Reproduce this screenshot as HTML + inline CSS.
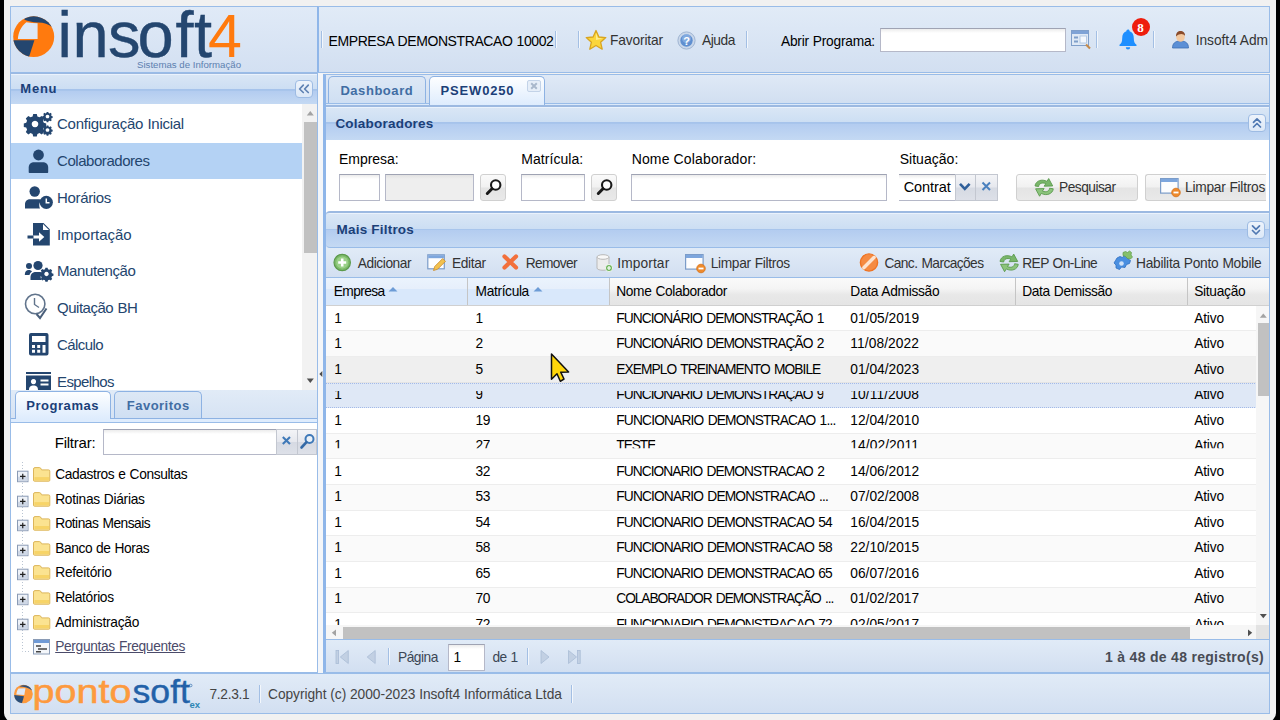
<!DOCTYPE html>
<html lang="pt-BR">
<head>
<meta charset="utf-8">
<title>Pontosoft - Colaboradores</title>
<style>
*{box-sizing:border-box;margin:0;padding:0}
html,body{width:1280px;height:720px;overflow:hidden;background:#000}
body{font-family:"Liberation Sans","DejaVu Sans",sans-serif;font-size:14px;color:#000;position:relative}
.abs{position:absolute}
#page{position:absolute;left:4px;top:0;width:1272px;height:722px;background:#f1f1f1;border-radius:0 0 9px 9px;overflow:hidden}
#app{position:absolute;left:-4px;top:0;width:1280px;height:720px}
.bd{border:1px solid #99bce8}
.t{position:absolute;white-space:nowrap;line-height:1}
.hdrgrad{border-top:2px solid #9cb9e1;background:linear-gradient(#eaf2fc 0,#eaf2fc 1px,#d9e6f5 1px,#ccdef3 15.500px,#a6c3eb 15.500px,#a9c6ec 17px,#b3ccf0 17px,#c4d9f3 100%)}
.tb{background:linear-gradient(#e1ebf7,#d2dff1)}
.sep{position:absolute;width:2px;border-left:1px solid #a3bfe4;border-right:1px solid #f3f7fc}
.inp{position:absolute;background:#fff linear-gradient(#ececec,#fff 4px);border:1px solid #b5b8c8;border-top-color:#9fa3b3}
.ro{background:#eee linear-gradient(#e2e2e2,#eee 4px)}
.btn{position:absolute;border:1px solid #d0d0d0;border-radius:3px;background:linear-gradient(#fafafa 0,#f1f1f1 48%,#e4e4e4 52%,#e9e9e9 100%)}
.trg{position:absolute;border:1px solid #c3c7d0;background:linear-gradient(#f3f4f7 0,#e6e8ee 48%,#d6dae3 52%,#dde0e8 100%)}
.tab{position:absolute;border:1px solid #8db2e3;border-bottom:none;border-radius:5px 5px 0 0;background:linear-gradient(#dde8f5,#cfdff3)}
.tab.on{background:linear-gradient(#fdfeff,#deecfd)}
.mi{position:absolute;left:11px;width:291px;height:36px}
svg{position:absolute;overflow:visible}
.gh{position:absolute;top:0;height:100%;border-right:1px solid #c5c5c5}
.row{position:absolute;left:0;width:931px;border-bottom:1px solid #ededed;background:#fff}
.row.alt{background:#fafafa}
</style>
</head>
<body>
<div id="page"><div id="app">

<!-- ============ NORTH: logo + top toolbar ============ -->
<div class="abs bd" style="left:10px;top:6px;width:309px;height:67px;background:linear-gradient(#e0eaf7,#d3e0f2)"></div>
<svg style="left:0;top:0" width="320" height="74" viewBox="0 0 320 74">
  <clipPath id="lgc"><ellipse cx="33.700" cy="36.650" rx="20.500" ry="20.300"/></clipPath>
  <ellipse cx="33.700" cy="36.650" rx="20.500" ry="20.300" fill="#ff7a0e"/>
  <g clip-path="url(#lgc)">
  <path d="M24.500 19.800 L24 12 L56 12 L56 30 L52.500 27.600 C48.500 23.700 43.500 22.300 37.600 22.400 C32.500 22.400 28 21.300 24.500 19.800Z" fill="#24466f"/>
  <path d="M37.600 23.300 L37.600 38.900 L17.900 38.900 C18.300 32.500 21 26.800 26.300 22.300 C30 22.900 34 23.200 37.600 23.300Z" fill="#dde8f6"/>
  <path d="M10 40.300 L34.400 40.300 L28.700 58 L10 58Z" fill="#24466f"/>
  </g>
  <text font-family="Liberation Sans, sans-serif" font-size="65" fill="#24466f" y="56.5" x="57.5 72.5 108 137.5 175.5 194" stroke="#24466f" stroke-width="0.4">insoft</text>
  <text font-family="Liberation Sans, sans-serif" font-size="61" fill="#ff7a0e" y="56.5" x="208">4</text>
  <text font-family="Liberation Sans, sans-serif" font-size="9.6" fill="#5c80b0" y="68.3" x="137" textLength="104" lengthAdjust="spacingAndGlyphs">Sistemas de Informação</text>
</svg>
<div class="abs bd tb" style="left:317px;top:6px;width:953px;height:67px;border-left:2px solid #8fb6e9"></div>
<div class="sep" style="left:321px;top:31px;height:17px"></div>
<div class="sep" style="left:555px;top:31px;height:17px"></div>
<div class="sep" style="left:578px;top:31px;height:17px"></div>
<div class="sep" style="left:746px;top:31px;height:17px"></div>
<div class="sep" style="left:1096px;top:31px;height:17px"></div>
<div class="sep" style="left:1153px;top:31px;height:17px"></div>
<svg style="left:585px;top:29px" width="22" height="22" viewBox="0 0 22 22"><path d="M11 1.5 L13.9 8 L20.8 8.6 L15.6 13.2 L17.2 20.2 L11 16.5 L4.8 20.2 L6.4 13.2 L1.2 8.6 L8.1 8Z" fill="#fbd63c" stroke="#d9a520" stroke-width="1.3" stroke-linejoin="round"/><path d="M11 4 L12.9 9 L17.5 9.4 L11 11Z" fill="#fff3a8" opacity=".8"/></svg>
<svg style="left:677px;top:31px" width="19" height="19" viewBox="0 0 19 19"><circle cx="9.5" cy="9.5" r="8.6" fill="#c9d7ea" stroke="#9fb4d2" stroke-width="1"/><circle cx="9.5" cy="9.5" r="6.2" fill="#5f8fd0"/><circle cx="9.5" cy="7.5" r="4.5" fill="#8eb4e6" opacity=".7"/><text x="9.5" y="13.6" font-size="11" font-weight="bold" text-anchor="middle" fill="#fff" font-family="Liberation Sans, sans-serif">?</text></svg>
<div class="inp" style="left:880px;top:28px;width:186px;height:24px"></div>
<svg style="left:1071px;top:30px" width="21" height="20" viewBox="0 0 21 20"><rect x=".5" y=".5" width="17" height="15" fill="#dfe9f5" stroke="#7f9fca"/><rect x="1" y="1" width="16" height="3" fill="#7fa3d6"/><rect x="3" y="6.5" width="4" height="2" fill="#7f9fca"/><rect x="3" y="10.5" width="4" height="2" fill="#7f9fca"/><rect x="9" y="6" width="6.5" height="7" fill="#f4f8fd" stroke="#a8c0df" stroke-width=".8"/><path d="M15 14.5 l4 4" stroke="#c58a4a" stroke-width="2.2"/></svg>
<svg style="left:1117px;top:28px" width="22" height="23" viewBox="0 0 22 23"><path d="M11 1.5 c1 0 1.6.7 1.6 1.7 c3 1 4.2 3.6 4.2 7 c0 3.8 1 5.2 2.700 6.600 v1.200 h-17 v-1.200 c1.700 -1.400 2.700 -2.800 2.700 -6.600 c0 -3.400 1.200 -6 4.200 -7 c0 -1 .6 -1.700 1.600 -1.700z M8.800 19.200 h4.400 a2.200 2.200 0 0 1 -4.400 0z" fill="#1e8fff"/></svg>
<div class="abs" style="left:1132px;top:18px;width:18px;height:18px;border-radius:9px;background:#ee1d0d"></div>
<svg style="left:1171px;top:30px" width="19" height="19" viewBox="0 0 19 19"><path d="M1.5 18 c0 -4.500 2.500 -7 8 -7 s8 2.500 8 7z" fill="#5b8fd6" stroke="#3e6fb3" stroke-width=".8"/><ellipse cx="9.5" cy="7" rx="4.3" ry="4.8" fill="#f3c9a0"/><path d="M5 6.5 c0 -4 2 -5.500 4.500 -5.500 s4.800 1.500 4.500 5 c-1.500 -2.200 -5 -3 -9 .5z" fill="#8a4b2a"/></svg>
<div class="t" style="left:328.50px;top:34.00px;font-size:14px;letter-spacing:-0.40px;word-spacing:0.60px;">EMPRESA DEMONSTRACAO 10002</div><div class="t" style="left:610.00px;top:33.62px;font-size:13.75px;color:#333;letter-spacing:-0.14px;">Favoritar</div><div class="t" style="left:702.00px;top:33.62px;font-size:13.75px;color:#333;letter-spacing:-0.43px;">Ajuda</div><div class="t" style="left:781.00px;top:34.62px;font-size:13.75px;letter-spacing:-0.23px;word-spacing:0.35px;">Abrir Programa:</div><div class="t" style="left:1137.30px;top:21.00px;font-size:13px;font-weight:bold;color:#fff;font-family:'Liberation Serif',serif;">8</div><div class="t" style="left:1195.70px;top:33.62px;font-size:13.75px;color:#333;letter-spacing:-0.03px;">Insoft4 Adm</div>
<!-- ============ WEST: menu + programas ============ -->
<div class="abs bd" style="left:10px;top:72px;width:308px;height:601px;background:#fff"></div>
<div class="abs hdrgrad" style="left:11px;top:73px;width:306px;height:31px;border-top-width:1px"></div>
<div class="abs" style="left:295px;top:80px;width:18px;height:18px;border:1px solid #9dbbe3;border-radius:4px;background:linear-gradient(#edf3fb,#dce8f7)"></div>
<svg style="left:295px;top:80px" width="18" height="18" viewBox="0 0 18 18"><path d="M8.3 5.200 L4.600 9 L8.300 12.500 M13.300 5.200 L9.600 9 L13.300 12.500" fill="none" stroke="#5f82b3" stroke-width="1.700" stroke-linecap="round" stroke-linejoin="round"/></svg>
<!-- menu scroll bar -->
<div class="abs" style="left:302px;top:104px;width:15px;height:286px;background:#f2f2f2"></div>
<div class="abs" style="left:304px;top:122px;width:13px;height:131px;background:#c1c1c1"></div>
<svg style="left:302px;top:104px" width="16" height="286" viewBox="0 0 16 286"><path d="M4.800 11.500 L8.300 7 L11.800 11.500Z" fill="#a3a3a3"/><path d="M4.800 274.500 L8.300 279 L11.800 274.500Z" fill="#505050"/></svg>
<!-- selected item -->
<div class="abs" style="left:11px;top:143px;width:291px;height:36px;background:#b4d2f4"></div>

<svg style="left:0;top:0" width="60" height="392" viewBox="0 0 60 392" fill="#24466f">
 <!-- gears -->
 <g transform="translate(35,124)"><path d="M-1.800 -10 h3.600 l.6 2.400 l2.100 .9 l2.200 -1.300 l2.500 2.500 l-1.300 2.200 l.9 2.100 l2.400 .6 v3.600 l-2.400 .6 l-.9 2.100 l1.300 2.200 l-2.500 2.500 l-2.200 -1.300 l-2.100 .9 l-.6 2.400 h-3.600 l-.6 -2.400 l-2.100 -.9 l-2.200 1.300 l-2.500 -2.500 l1.300 -2.200 l-.9 -2.100 l-2.400 -.6 v-3.600 l2.400 -.6 l.9 -2.100 l-1.300 -2.200 l2.500 -2.500 l2.200 1.300 l2.100 -.9z M0 -3.300 a3.300 3.300 0 1 0 .01 0z" fill-rule="evenodd"/></g>
 <g transform="translate(47.5,116.500) scale(.46)"><path d="M-1.800 -10 h3.600 l.6 2.400 l2.100 .9 l2.200 -1.300 l2.500 2.500 l-1.300 2.200 l.9 2.100 l2.400 .6 v3.600 l-2.400 .6 l-.9 2.100 l1.300 2.200 l-2.500 2.500 l-2.200 -1.300 l-2.100 .9 l-.6 2.400 h-3.600 l-.6 -2.400 l-2.100 -.9 l-2.200 1.300 l-2.500 -2.500 l1.300 -2.200 l-.9 -2.100 l-2.400 -.6 v-3.600 l2.400 -.6 l.9 -2.100 l-1.300 -2.200 l2.500 -2.500 l2.200 1.300 l2.100 -.9z M0 -4 a4 4 0 1 0 .01 0z" fill-rule="evenodd"/></g>
 <g transform="translate(47.500,130) scale(.46)"><path d="M-1.800 -10 h3.600 l.6 2.400 l2.100 .9 l2.200 -1.300 l2.500 2.500 l-1.300 2.200 l.9 2.100 l2.400 .6 v3.600 l-2.400 .6 l-.9 2.100 l1.300 2.200 l-2.500 2.500 l-2.200 -1.300 l-2.100 .9 l-.6 2.400 h-3.600 l-.6 -2.400 l-2.100 -.9 l-2.200 1.300 l-2.500 -2.500 l1.300 -2.200 l-.9 -2.100 l-2.400 -.6 v-3.600 l2.400 -.6 l.9 -2.100 l-1.300 -2.200 l2.500 -2.500 l2.200 1.300 l2.100 -.9z M0 -4 a4 4 0 1 0 .01 0z" fill-rule="evenodd"/></g>
 <!-- user -->
 <circle cx="38.500" cy="155" r="5.400"/><path d="M28.700 172 v-4.500 c0 -3.500 2.500 -5.300 5.500 -5.300 h8.500 c3 0 5.500 1.800 5.500 5.300 v4.500 c0 .6 -.4 1 -1 1 h-17.500 c-.6 0 -1 -.4 -1 -1z"/>
 <!-- user clock -->
 <circle cx="34.700" cy="191.500" r="5.200"/><path d="M25 208.500 v-4 c0 -3.500 2.300 -5.300 5.200 -5.300 h9 c1 0 2 .3 2.800 .8 c-2.500 1.500 -3.500 5 -2 8.500z"/>
 <circle cx="46.300" cy="202.300" r="6.600"/><path d="M46.300 198.500 v4.200 h3.200" fill="none" stroke="#fff" stroke-width="1.500"/>
 <!-- import -->
 <path d="M33 223 h10.500 l6.300 6.300 v16.200 h-16.800 v-7 h6 v3.300 l5.300 -4.800 l-5.300 -4.800 v3.300 h-6z M43 224 v6 h6z" fill-rule="evenodd"/><rect x="27.500" y="235.500" width="6" height="3"/>
 <!-- group + gear -->
 <circle cx="29" cy="266" r="3"/><path d="M24.800 275 c0 -3.500 1.500 -5 4 -5 c1.500 0 2.500 .5 3.200 1.500 c-1.500 1 -2.200 2.300 -2.500 3.500z"/>
 <circle cx="38" cy="265.500" r="4.600"/><path d="M30.500 280 v-2.500 c0 -3.800 2.500 -5.500 5.500 -5.500 h4 c1 0 1.800 .2 2.500 .5 c-2 2 -2.500 5 -1 7.500z"/>
 <g transform="translate(46.500,274) scale(.62)"><path d="M-1.800 -10 h3.600 l.6 2.400 l2.100 .9 l2.200 -1.300 l2.500 2.500 l-1.300 2.200 l.9 2.100 l2.400 .6 v3.600 l-2.400 .6 l-.9 2.100 l1.300 2.200 l-2.500 2.500 l-2.200 -1.300 l-2.100 .9 l-.6 2.400 h-3.600 l-.6 -2.400 l-2.100 -.9 l-2.200 1.300 l-2.500 -2.500 l1.300 -2.200 l-.9 -2.100 l-2.400 -.6 v-3.600 l2.400 -.6 l.9 -2.100 l-1.300 -2.200 l2.500 -2.500 l2.200 1.300 l2.100 -.9z M0 -3.600 a3.600 3.600 0 1 0 .01 0z" fill-rule="evenodd"/></g>
 <!-- clock check -->
 <g fill="none" stroke="#61748c" stroke-width="1.600"><circle cx="35.200" cy="304" r="9.700"/><path d="M34.500 298 v6.500 l4.500 3" stroke-width="1.400"/></g>
 <path d="M36.500 314 l3.500 4 l6.500 -9.500" fill="none" stroke="#4a5f7a" stroke-width="2"/>
 <!-- calculator -->
 <path d="M31 333 h15.500 a2 2 0 0 1 2 2 v18.600 a2 2 0 0 1 -2 2 h-15.500 a2 2 0 0 1 -2 -2 v-18.600 a2 2 0 0 1 2 -2z M32 336 v6 h13.500 v-6z M32 345 v3 h3 v-3z M37.200 345 v3 h3 v-3z M42.500 345 v7.800 h3 v-7.800z M32 349.800 v3 h3 v-3z M37.200 349.800 v3 h3 v-3z" fill-rule="evenodd"/>
 <!-- id card -->
 <path d="M26 372 h25 v2 h-25z M26 375.500 h25 v14.500 h-25z M33.500 379 a2.600 2.600 0 1 0 .01 0z M29 390 c0 -3.500 2 -4.500 4.500 -4.500 s4.500 1 4.500 4.500z M40.500 379.500 v2 h8 v-2z M40.500 383.500 v2 h8 v-2z" fill-rule="evenodd"/>
</svg>
<div class="t" style="left:57.00px;top:116.00px;font-size:15px;color:#23456e;letter-spacing:-0.26px;word-spacing:0.40px;">Configuração Inicial</div><div class="t" style="left:57.00px;top:153.00px;font-size:15px;color:#23456e;letter-spacing:-0.45px;">Colaboradores</div><div class="t" style="left:57.00px;top:190.00px;font-size:15px;color:#23456e;letter-spacing:-0.34px;">Horários</div><div class="t" style="left:57.00px;top:227.00px;font-size:15px;color:#23456e;letter-spacing:-0.05px;">Importação</div><div class="t" style="left:57.00px;top:263.00px;font-size:15px;color:#23456e;letter-spacing:-0.41px;">Manutenção</div><div class="t" style="left:57.00px;top:300.00px;font-size:15px;color:#23456e;letter-spacing:-0.48px;word-spacing:0.70px;">Quitação BH</div><div class="t" style="left:57.00px;top:337.00px;font-size:15px;color:#23456e;letter-spacing:-0.58px;">Cálculo</div><div class="t" style="left:57.00px;top:374.00px;font-size:15px;color:#23456e;letter-spacing:-0.59px;">Espelhos</div><div class="t" style="left:20.30px;top:82.00px;font-size:13px;font-weight:bold;color:#1b3f78;letter-spacing:0.76px;">Menu</div>
<div class="abs" style="left:11px;top:390px;width:306px;height:33px;background:linear-gradient(#e1ebf7,#d5e2f3);border-bottom:1px solid #99bce8"></div>
<div class="abs" style="left:11px;top:418px;width:306px;height:4px;background:#deecfd;border-top:1px solid #8db2e3"></div>
<div class="tab on" style="left:15px;top:391px;width:96px;height:28px"></div>
<div class="tab" style="left:114px;top:391px;width:88px;height:27px"></div>
<div class="t" style="left:26.30px;top:399.00px;font-size:13px;font-weight:bold;color:#1b3f78;letter-spacing:0.53px;">Programas</div><div class="t" style="left:126.80px;top:399.00px;font-size:13px;font-weight:bold;color:#416da3;letter-spacing:0.48px;">Favoritos</div><div class="t" style="left:54.70px;top:435.00px;font-size:15px;letter-spacing:-0.22px;">Filtrar:</div>
<div class="inp" style="left:103px;top:429px;width:174px;height:26px"></div>
<div class="trg" style="left:276px;top:429px;width:22px;height:26px"></div>
<div class="trg" style="left:297px;top:429px;width:20px;height:26px"></div>
<svg style="left:276px;top:429px" width="42" height="26" viewBox="0 0 42 26"><path d="M6.800 8 L14 15 M14 8 L6.800 15" stroke="#3f79b8" stroke-width="2.100" fill="none"/><circle cx="33.500" cy="10" r="4" fill="#eaf1f8" stroke="#3f79b8" stroke-width="2"/><path d="M30.500 13.200 L25.500 18.500" stroke="#356aa6" stroke-width="2.600" stroke-linecap="round"/></svg>
<svg style="left:0;top:0" width="60" height="672" viewBox="0 0 60 672"><path d="M22.500 462 V651.500 H31" fill="none" stroke="#b9c4d2" stroke-width="1" stroke-dasharray="1 2"/><rect x="17.500" y="471.2" width="10.500" height="10.500" fill="#eef2f8" stroke="#8a9bb5"/><rect x="18" y="476.7" width="9.5" height="4.500" fill="#cfd8e6"/><path d="M20 476.45 h5.500 M22.750 473.70 v5.500" stroke="#222" stroke-width="1.200"/><path d="M33.500 469.1 q0 -1.500 1.500 -1.500 h4.500 q1.200 0 1.700 1.500 l.4 .8 h7 q1.200 0 1.200 1.300 v9 q0 1 -1 1 h-14.300 q-1 0 -1 -1z" fill="#fbe391" stroke="#dcb55a" stroke-width="1"/><path d="M34.500 477.1 h14.500 v3 h-14.500z" fill="#f6cf5e" opacity=".8"/><rect x="17.500" y="496.2" width="10.500" height="10.500" fill="#eef2f8" stroke="#8a9bb5"/><rect x="18" y="501.7" width="9.5" height="4.500" fill="#cfd8e6"/><path d="M20 501.45 h5.500 M22.750 498.70 v5.500" stroke="#222" stroke-width="1.200"/><path d="M33.500 494.1 q0 -1.500 1.500 -1.500 h4.500 q1.200 0 1.700 1.500 l.4 .8 h7 q1.200 0 1.200 1.300 v9 q0 1 -1 1 h-14.300 q-1 0 -1 -1z" fill="#fbe391" stroke="#dcb55a" stroke-width="1"/><path d="M34.500 502.1 h14.500 v3 h-14.500z" fill="#f6cf5e" opacity=".8"/><rect x="17.500" y="520.2" width="10.500" height="10.500" fill="#eef2f8" stroke="#8a9bb5"/><rect x="18" y="525.7" width="9.5" height="4.500" fill="#cfd8e6"/><path d="M20 525.45 h5.500 M22.750 522.70 v5.500" stroke="#222" stroke-width="1.200"/><path d="M33.500 518.1 q0 -1.500 1.500 -1.500 h4.500 q1.200 0 1.700 1.500 l.4 .8 h7 q1.200 0 1.200 1.300 v9 q0 1 -1 1 h-14.300 q-1 0 -1 -1z" fill="#fbe391" stroke="#dcb55a" stroke-width="1"/><path d="M34.500 526.1 h14.500 v3 h-14.500z" fill="#f6cf5e" opacity=".8"/><rect x="17.500" y="545.2" width="10.500" height="10.500" fill="#eef2f8" stroke="#8a9bb5"/><rect x="18" y="550.7" width="9.5" height="4.500" fill="#cfd8e6"/><path d="M20 550.45 h5.500 M22.750 547.70 v5.500" stroke="#222" stroke-width="1.200"/><path d="M33.500 543.1 q0 -1.500 1.500 -1.500 h4.500 q1.200 0 1.700 1.500 l.4 .8 h7 q1.200 0 1.200 1.300 v9 q0 1 -1 1 h-14.300 q-1 0 -1 -1z" fill="#fbe391" stroke="#dcb55a" stroke-width="1"/><path d="M34.500 551.1 h14.500 v3 h-14.500z" fill="#f6cf5e" opacity=".8"/><rect x="17.500" y="569.2" width="10.500" height="10.500" fill="#eef2f8" stroke="#8a9bb5"/><rect x="18" y="574.7" width="9.5" height="4.500" fill="#cfd8e6"/><path d="M20 574.45 h5.500 M22.750 571.70 v5.500" stroke="#222" stroke-width="1.200"/><path d="M33.500 567.1 q0 -1.500 1.500 -1.500 h4.500 q1.200 0 1.700 1.500 l.4 .8 h7 q1.200 0 1.200 1.300 v9 q0 1 -1 1 h-14.300 q-1 0 -1 -1z" fill="#fbe391" stroke="#dcb55a" stroke-width="1"/><path d="M34.500 575.1 h14.500 v3 h-14.500z" fill="#f6cf5e" opacity=".8"/><rect x="17.500" y="594.2" width="10.500" height="10.500" fill="#eef2f8" stroke="#8a9bb5"/><rect x="18" y="599.7" width="9.5" height="4.500" fill="#cfd8e6"/><path d="M20 599.45 h5.500 M22.750 596.70 v5.500" stroke="#222" stroke-width="1.200"/><path d="M33.500 592.1 q0 -1.500 1.500 -1.500 h4.500 q1.200 0 1.700 1.500 l.4 .8 h7 q1.200 0 1.200 1.300 v9 q0 1 -1 1 h-14.300 q-1 0 -1 -1z" fill="#fbe391" stroke="#dcb55a" stroke-width="1"/><path d="M34.500 600.1 h14.500 v3 h-14.500z" fill="#f6cf5e" opacity=".8"/><rect x="17.500" y="619.2" width="10.500" height="10.500" fill="#eef2f8" stroke="#8a9bb5"/><rect x="18" y="624.7" width="9.5" height="4.500" fill="#cfd8e6"/><path d="M20 624.45 h5.500 M22.750 621.70 v5.500" stroke="#222" stroke-width="1.200"/><path d="M33.500 617.1 q0 -1.500 1.500 -1.500 h4.500 q1.200 0 1.700 1.500 l.4 .8 h7 q1.200 0 1.200 1.300 v9 q0 1 -1 1 h-14.300 q-1 0 -1 -1z" fill="#fbe391" stroke="#dcb55a" stroke-width="1"/><path d="M34.500 625.1 h14.500 v3 h-14.500z" fill="#f6cf5e" opacity=".8"/><rect x="33.500" y="639.5" width="16" height="14.500" fill="#f4f7fb" stroke="#8a9bb5"/><rect x="34" y="640.0" width="15" height="3" fill="#6f9ad6"/><path d="M36 646.0 h5 M38 649.0 h9 M36 651.7 h5" stroke="#444" stroke-width="1.400"/></svg><div class="t" style="left:55.20px;top:467.62px;font-size:13.75px;letter-spacing:-0.39px;word-spacing:0.58px;">Cadastros e Consultas</div><div class="t" style="left:55.20px;top:492.62px;font-size:13.75px;letter-spacing:-0.28px;word-spacing:0.42px;">Rotinas Diárias</div><div class="t" style="left:55.20px;top:516.62px;font-size:13.75px;letter-spacing:-0.49px;word-spacing:0.75px;">Rotinas Mensais</div><div class="t" style="left:55.20px;top:541.62px;font-size:13.75px;letter-spacing:-0.41px;word-spacing:0.56px;">Banco de Horas</div><div class="t" style="left:55.20px;top:565.62px;font-size:13.75px;letter-spacing:-0.24px;">Refeitório</div><div class="t" style="left:55.20px;top:590.62px;font-size:13.75px;letter-spacing:-0.34px;">Relatórios</div><div class="t" style="left:55.20px;top:615.62px;font-size:13.75px;letter-spacing:-0.24px;">Administração</div><div class="t" style="left:55.20px;top:639.62px;font-size:13.75px;color:#4b4b6a;letter-spacing:-0.33px;word-spacing:0.52px;text-decoration:underline;">Perguntas Frequentes</div>
<!-- ============ CENTER: tabs + form + grid ============ -->
<div class="abs" style="left:318px;top:73px;width:5px;height:600px;background:#f4f6f9"></div>
<div class="abs" style="left:323px;top:74px;width:947px;height:599px;background:#dfe8f6;border:1px solid #99bce8;border-left:3px solid #8fb6e9"></div>
<!-- tab strip -->
<div class="abs" style="left:326px;top:75px;width:943px;height:29px;background:linear-gradient(#dfe9f6,#d1dff1);border-bottom:1px solid #99bce8"></div>
<div class="abs" style="left:326px;top:104px;width:943px;height:1px;background:#dbe9fa"></div>
<div class="tab" style="left:328px;top:76px;width:98px;height:27px"></div>
<div class="tab on" style="left:429px;top:76px;width:116px;height:29px"></div>
<div class="abs" style="left:527px;top:80px;width:14px;height:12px;border:1px solid #c3d3e8;border-radius:2px;background:#e6eef8"></div>
<svg style="left:527px;top:80px" width="14" height="12" viewBox="0 0 14 12"><path d="M4.200 3.300 L9.800 8.700 M9.800 3.300 L4.200 8.700" stroke="#a9b8cc" stroke-width="2" fill="none"/></svg>
<!-- Colaboradores panel header -->
<div class="abs hdrgrad" style="left:326px;top:105px;width:943px;height:35px"></div>
<div class="abs" style="left:1248px;top:114px;width:18px;height:18px;border:1px solid #9dbbe3;border-radius:4px;background:linear-gradient(#edf3fb,#dce8f7)"></div>
<svg style="left:1248px;top:114px" width="18" height="18" viewBox="0 0 18 18"><path d="M5.500 8.300 L9 4.800 L12.500 8.300 M5.500 13 L9 9.500 L12.500 13" fill="none" stroke="#4f78b2" stroke-width="1.700" stroke-linecap="round" stroke-linejoin="round"/></svg>
<!-- form body -->
<div class="abs" style="left:326px;top:140px;width:943px;height:72px;background:#fff"></div>
<div class="inp" style="left:339px;top:174px;width:41px;height:27px"></div>
<div class="inp ro" style="left:385px;top:174px;width:89px;height:27px"></div>
<div class="btn" style="left:480px;top:174px;width:26px;height:27px"></div>
<div class="inp" style="left:521px;top:174px;width:64px;height:27px"></div>
<div class="btn" style="left:591px;top:174px;width:26px;height:27px"></div>
<div class="inp" style="left:631px;top:174px;width:256px;height:27px"></div>
<div class="inp" style="left:899px;top:174px;width:58px;height:27px;border-left:none;border-right:none"></div>
<div class="trg" style="left:955px;top:174px;width:21px;height:27px"></div>
<div class="trg" style="left:975px;top:174px;width:23px;height:27px"></div>
<svg style="left:955px;top:174px" width="44" height="27" viewBox="0 0 44 27"><path d="M5 9.800 L9.800 14.800 L14.600 9.800" fill="none" stroke="#2f5f9a" stroke-width="2.600"/><path d="M27.500 8.500 L35 16 M35 8.500 L27.500 16" stroke="#4a80be" stroke-width="2" fill="none"/></svg>
<svg style="left:480px;top:174px" width="140" height="27" viewBox="0 0 140 27"><g id="mag"><circle cx="15.700" cy="11" r="4.700" fill="#fff" stroke="#1a1a1a" stroke-width="2.100"/><path d="M12 14.700 L7.300 19.500" stroke="#1a1a1a" stroke-width="3" stroke-linecap="round"/></g><use href="#mag" x="111"/></svg>
<div class="btn" style="left:1016px;top:174px;width:122px;height:27px"></div>
<div class="btn" style="left:1145px;top:174px;width:121px;height:27px;border-right:none;border-radius:3px 0 0 3px"></div>
<svg style="left:1033px;top:177px" width="22" height="21" viewBox="0 0 22 21"><g id="rfr" transform="translate(-1.400,-1.300) scale(1.140)"><path d="M3 9 C3.500 4.500 9 2.500 13.500 5 L15 2.500 L18.500 9 L11 9.200 L12.500 7 C9 5.500 6.500 7 6.200 9.500Z" fill="#79b66a" stroke="#5b9a4e" stroke-width=".8"/><path d="M19 11.500 C18.500 16 13 18 8.500 15.500 L7 18 L3.500 11.500 L11 11.300 L9.500 13.500 C13 15 15.500 13.500 15.800 11Z" fill="#8cc47c" stroke="#5b9a4e" stroke-width=".8"/></g></svg>
<svg style="left:1160px;top:178px" width="22" height="20" viewBox="0 0 22 20"><g id="clr"><rect x=".6" y=".6" width="17.500" height="14.500" fill="#fdfdfe" stroke="#7b9cc9" stroke-width="1.200"/><rect x="1" y="1" width="16.700" height="3" fill="#7da6dd"/><circle cx="16" cy="14.500" r="4.300" fill="#ee8a2c" stroke="#d6721a" stroke-width=".8"/><rect x="13.500" y="13.600" width="5" height="1.800" fill="#fff"/></g></svg>
<!-- Mais Filtros header -->
<div class="abs hdrgrad" style="left:326px;top:211px;width:943px;height:37px;border-bottom:1px solid #99bce8;border-radius:4px 0 0 4px"></div>
<div class="abs" style="left:1247px;top:221px;width:18px;height:18px;border:1px solid #9dbbe3;border-radius:4px;background:linear-gradient(#edf3fb,#dce8f7)"></div>
<svg style="left:1247px;top:221px" width="18" height="18" viewBox="0 0 18 18"><path d="M5.500 4.800 L9 8.300 L12.500 4.800 M5.500 9.500 L9 13 L12.500 9.500" fill="none" stroke="#4f78b2" stroke-width="1.700" stroke-linecap="round" stroke-linejoin="round"/></svg>
<!-- grid toolbar -->
<div class="abs tb" style="left:326px;top:248px;width:943px;height:30px;border-bottom:1px solid #99bce8"></div>
<svg style="left:326px;top:248px" width="944" height="30" viewBox="326 248 944 30">
 <circle cx="342.200" cy="262.500" r="8.200" fill="#7dbb6a" stroke="#5c9a4c" stroke-width="1.200"/><circle cx="342.200" cy="262.500" r="6" fill="#9ad088"/><path d="M338.200 262.500 h8 M342.200 258.500 v8" stroke="#fff" stroke-width="2.600"/>
 <rect x="427.800" y="254.800" width="16.500" height="14" fill="#fdfdfe" stroke="#7b9cc9" stroke-width="1.200"/><rect x="428.200" y="255.200" width="15.700" height="3" fill="#7da6dd"/><path d="M433.500 270.500 l1.200 -4 l8 -8 l2.800 2.800 l-8 8z" fill="#f2c14e" stroke="#c98a2b" stroke-width=".8"/>
 <path d="M504.500 256.500 L516 267.500 M516 256.500 L504.500 267.500" stroke="#f2703c" stroke-width="4.200" stroke-linecap="round"/>
 <path d="M597 257 v11 c0 3 12 3 12 0 v-11" fill="#ececec" stroke="#b9b9b9"/><ellipse cx="603" cy="257" rx="6" ry="2.300" fill="#f8f8f8" stroke="#b9b9b9"/><circle cx="609" cy="268" r="3.600" fill="#6fb45c" stroke="#fff" stroke-width=".8"/><path d="M607 268 h4 M609 266 v4" stroke="#fff" stroke-width="1.200"/>
 <use href="#clr" x="685" y="254"/>
 <circle cx="869" cy="262.500" r="8.600" fill="#f58b42" stroke="#ee7424" stroke-width="1.400"/><path d="M863.800 267.700 L874.200 257.300" stroke="#fde3cf" stroke-width="3.400" stroke-linecap="round"/>
 <use href="#rfr" x="998" y="252.500" transform="translate(0,0)"/>
 <path d="M1117 258 l3 -1.500 l2.500 1 l2 -2.500 l3 1 l.5 3 l2.500 1.500 l-1 3 l-3 1 l-1.500 3 l-3.500 -.5 l-2 2.500 l-3.500 -1.500 v-3 l-2 -2 l1.500 -2.500z" fill="#4a8fe0" stroke="#2f6fc0" stroke-width=".8"/><path d="M1123 252.500 l2.500 -1 l2 1 l2 -1.500 l2 1.500 l-.5 2.500 l1.500 2 l-2 2 l-3 -.5 l-2 -2 l-2.500 -1z" fill="#86c06c" stroke="#5f9c48" stroke-width=".7"/><circle cx="1121.500" cy="263.500" r="2.300" fill="#cfe2f8"/>
</svg>
<!-- grid header -->
<div class="abs" style="left:326px;top:278px;width:943px;height:28px;background:linear-gradient(#fafafa,#f4f4f4 40%,#e8e8e8 62%,#e5e5e5);border-bottom:1px solid #d0d0d0"></div>
<div class="abs" style="left:326px;top:278px;width:284px;height:27px;background:linear-gradient(#ebf3fd 0,#e6effb 40%,#d9e8fb 42%,#d9e8fb 100%)"></div>
<div class="abs" style="left:467px;top:278px;width:1px;height:27px;background:#c5c5c5"></div>
<div class="abs" style="left:609px;top:278px;width:1px;height:27px;background:#c5c5c5"></div>
<div class="abs" style="left:1015px;top:278px;width:1px;height:27px;background:#c5c5c5"></div>
<div class="abs" style="left:1187px;top:278px;width:1px;height:27px;background:#c5c5c5"></div>
<svg style="left:388px;top:286px" width="160" height="8" viewBox="0 0 160 8"><path d="M.5 5.500 L5 1 L9.500 5.500Z M145.500 5.500 L150 1 L154.500 5.500Z" fill="#6d9cd6"/></svg>
<!-- grid body -->
<div class="abs" style="left:326px;top:306px;width:930px;height:319px;background:#fff;overflow:hidden">
<div class="row" style="top:-0.30px;height:25.63px;"></div>
<div class="t" style="left:8.30px;top:5.62px;font-size:13.75px;">1</div><div class="t" style="left:149.60px;top:5.62px;font-size:13.75px;letter-spacing:-0.66px;">1</div><div class="t" style="left:290.30px;top:5.62px;font-size:13.75px;letter-spacing:-0.96px;word-spacing:1.45px;">FUNCIONÁRIO DEMONSTRAÇÃO 1</div><div class="t" style="left:524.30px;top:5.62px;font-size:13.75px;">01/05/2019</div><div class="t" style="left:868.20px;top:5.62px;font-size:13.75px;letter-spacing:-0.18px;">Ativo</div>
<div class="row alt" style="top:25.33px;height:25.63px;"></div>
<div class="t" style="left:8.30px;top:30.62px;font-size:13.75px;">1</div><div class="t" style="left:149.60px;top:30.62px;font-size:13.75px;letter-spacing:-0.66px;">2</div><div class="t" style="left:290.30px;top:30.62px;font-size:13.75px;letter-spacing:-0.96px;word-spacing:1.45px;">FUNCIONÁRIO DEMONSTRAÇÃO 2</div><div class="t" style="left:524.30px;top:30.62px;font-size:13.75px;letter-spacing:0.09px;">11/08/2022</div><div class="t" style="left:868.20px;top:30.62px;font-size:13.75px;letter-spacing:-0.18px;">Ativo</div>
<div class="row" style="top:50.96px;height:25.63px;background:#efefef;border-bottom-color:#e4e4e4;"></div>
<div class="t" style="left:8.30px;top:56.62px;font-size:13.75px;">1</div><div class="t" style="left:149.60px;top:56.62px;font-size:13.75px;letter-spacing:-0.66px;">5</div><div class="t" style="left:290.30px;top:56.62px;font-size:13.75px;letter-spacing:-0.94px;word-spacing:1.42px;">EXEMPLO TREINAMENTO MOBILE</div><div class="t" style="left:524.30px;top:56.62px;font-size:13.75px;">01/04/2023</div><div class="t" style="left:868.20px;top:56.62px;font-size:13.75px;letter-spacing:-0.18px;">Ativo</div>
<div class="row alt" style="top:76.59px;height:25.63px;background:#dfe8f6;border-top:1px dotted #a3bae9;border-bottom:1px dotted #a3bae9;"></div>
<div class="t" style="left:8.30px;top:81.62px;font-size:13.75px;clip-path:inset(3.500px 0 0 0);">1</div><div class="t" style="left:149.60px;top:81.62px;font-size:13.75px;letter-spacing:-0.66px;clip-path:inset(3.500px 0 0 0);">9</div><div class="t" style="left:290.30px;top:81.62px;font-size:13.75px;letter-spacing:-0.96px;word-spacing:1.45px;clip-path:inset(3.500px 0 0 0);">FUNCIONÁRIO DEMONSTRAÇÃO 9</div><div class="t" style="left:524.30px;top:81.62px;font-size:13.75px;letter-spacing:0.09px;clip-path:inset(3.500px 0 0 0);">10/11/2008</div><div class="t" style="left:868.20px;top:81.62px;font-size:13.75px;letter-spacing:-0.18px;clip-path:inset(3.500px 0 0 0);">Ativo</div>
<div class="row" style="top:102.22px;height:25.63px;"></div>
<div class="t" style="left:8.30px;top:107.62px;font-size:13.75px;">1</div><div class="t" style="left:149.60px;top:107.62px;font-size:13.75px;letter-spacing:-0.40px;">19</div><div class="t" style="left:290.30px;top:107.62px;font-size:13.75px;letter-spacing:-0.83px;word-spacing:1.27px;">FUNCIONARIO DEMONSTRACAO 1...</div><div class="t" style="left:524.30px;top:107.62px;font-size:13.75px;">12/04/2010</div><div class="t" style="left:868.20px;top:107.62px;font-size:13.75px;letter-spacing:-0.18px;">Ativo</div>
<div class="row alt" style="top:127.85px;height:25.63px;"></div>
<div class="t" style="left:8.30px;top:132.62px;font-size:13.75px;clip-path:inset(0 0 4.200px 0);">1</div><div class="t" style="left:149.60px;top:132.62px;font-size:13.75px;letter-spacing:-0.40px;clip-path:inset(0 0 4.200px 0);">27</div><div class="t" style="left:290.30px;top:132.62px;font-size:13.75px;letter-spacing:-1.06px;clip-path:inset(0 0 4.200px 0);">TESTE</div><div class="t" style="left:524.30px;top:132.62px;font-size:13.75px;letter-spacing:0.09px;clip-path:inset(0 0 4.200px 0);">14/02/2011</div><div class="t" style="left:868.20px;top:132.62px;font-size:13.75px;letter-spacing:-0.18px;clip-path:inset(0 0 4.200px 0);">Ativo</div>
<div class="row" style="top:153.48px;height:25.63px;"></div>
<div class="t" style="left:8.30px;top:158.62px;font-size:13.75px;">1</div><div class="t" style="left:149.60px;top:158.62px;font-size:13.75px;letter-spacing:-0.40px;">32</div><div class="t" style="left:290.30px;top:158.62px;font-size:13.75px;letter-spacing:-0.94px;word-spacing:1.42px;">FUNCIONARIO DEMONSTRACAO 2</div><div class="t" style="left:524.30px;top:158.62px;font-size:13.75px;">14/06/2012</div><div class="t" style="left:868.20px;top:158.62px;font-size:13.75px;letter-spacing:-0.18px;">Ativo</div>
<div class="row alt" style="top:179.11px;height:25.63px;"></div>
<div class="t" style="left:8.30px;top:183.62px;font-size:13.75px;">1</div><div class="t" style="left:149.60px;top:183.62px;font-size:13.75px;letter-spacing:-0.40px;">53</div><div class="t" style="left:290.30px;top:183.62px;font-size:13.75px;letter-spacing:-0.86px;word-spacing:1.31px;">FUNCIONARIO DEMONSTRACAO ...</div><div class="t" style="left:524.30px;top:183.62px;font-size:13.75px;">07/02/2008</div><div class="t" style="left:868.20px;top:183.62px;font-size:13.75px;letter-spacing:-0.18px;">Ativo</div>
<div class="row" style="top:204.74px;height:25.63px;"></div>
<div class="t" style="left:8.30px;top:209.62px;font-size:13.75px;">1</div><div class="t" style="left:149.60px;top:209.62px;font-size:13.75px;letter-spacing:-0.40px;">54</div><div class="t" style="left:290.30px;top:209.62px;font-size:13.75px;letter-spacing:-0.89px;word-spacing:1.34px;">FUNCIONARIO DEMONSTRACAO 54</div><div class="t" style="left:524.30px;top:209.62px;font-size:13.75px;">16/04/2015</div><div class="t" style="left:868.20px;top:209.62px;font-size:13.75px;letter-spacing:-0.18px;">Ativo</div>
<div class="row alt" style="top:230.37px;height:25.63px;"></div>
<div class="t" style="left:8.30px;top:234.62px;font-size:13.75px;">1</div><div class="t" style="left:149.60px;top:234.62px;font-size:13.75px;letter-spacing:-0.40px;">58</div><div class="t" style="left:290.30px;top:234.62px;font-size:13.75px;letter-spacing:-0.89px;word-spacing:1.34px;">FUNCIONARIO DEMONSTRACAO 58</div><div class="t" style="left:524.30px;top:234.62px;font-size:13.75px;">22/10/2015</div><div class="t" style="left:868.20px;top:234.62px;font-size:13.75px;letter-spacing:-0.18px;">Ativo</div>
<div class="row" style="top:256.00px;height:25.63px;"></div>
<div class="t" style="left:8.30px;top:260.62px;font-size:13.75px;">1</div><div class="t" style="left:149.60px;top:260.62px;font-size:13.75px;letter-spacing:-0.40px;">65</div><div class="t" style="left:290.30px;top:260.62px;font-size:13.75px;letter-spacing:-0.89px;word-spacing:1.34px;">FUNCIONARIO DEMONSTRACAO 65</div><div class="t" style="left:524.30px;top:260.62px;font-size:13.75px;">06/07/2016</div><div class="t" style="left:868.20px;top:260.62px;font-size:13.75px;letter-spacing:-0.18px;">Ativo</div>
<div class="row alt" style="top:281.63px;height:25.63px;"></div>
<div class="t" style="left:8.30px;top:285.62px;font-size:13.75px;">1</div><div class="t" style="left:149.60px;top:285.62px;font-size:13.75px;letter-spacing:-0.40px;">70</div><div class="t" style="left:290.30px;top:285.62px;font-size:13.75px;letter-spacing:-1.07px;word-spacing:1.62px;">COLABORADOR DEMONSTRAÇÃO ...</div><div class="t" style="left:524.30px;top:285.62px;font-size:13.75px;">01/02/2017</div><div class="t" style="left:868.20px;top:285.62px;font-size:13.75px;letter-spacing:-0.18px;">Ativo</div>
<div class="row" style="top:307.26px;height:25.63px;"></div>
<div class="t" style="left:8.30px;top:311.62px;font-size:13.75px;">1</div><div class="t" style="left:149.60px;top:311.62px;font-size:13.75px;letter-spacing:-0.40px;">72</div><div class="t" style="left:290.30px;top:311.62px;font-size:13.75px;letter-spacing:-0.89px;word-spacing:1.34px;">FUNCIONARIO DEMONSTRACAO 72</div><div class="t" style="left:524.30px;top:311.62px;font-size:13.75px;">02/05/2017</div><div class="t" style="left:868.20px;top:311.62px;font-size:13.75px;letter-spacing:-0.18px;">Ativo</div>

</div>
<!-- vertical scrollbar -->
<div class="abs" style="left:1256px;top:306px;width:13px;height:319px;background:#f6f6f6"></div>
<div class="abs" style="left:1258px;top:323px;width:11px;height:73px;background:#c1c1c1"></div>
<svg style="left:1256px;top:306px" width="13" height="320" viewBox="0 0 13 320"><path d="M3.800 11.700 L7.300 7.500 L10.800 11.700Z" fill="#a3a3a3"/><path d="M3.800 308 L7.300 312.200 L10.800 308Z" fill="#505050"/></svg>
<!-- horizontal scrollbar -->
<div class="abs" style="left:326px;top:625px;width:943px;height:15px;background:#f6f6f6"></div>
<div class="abs" style="left:342.500px;top:627px;width:847px;height:12px;background:#c1c1c1"></div>
<svg style="left:326px;top:626px" width="944" height="14" viewBox="0 0 944 14"><path d="M10 3.500 L5.800 6.800 L10 10.200Z" fill="#a3a3a3"/><path d="M922 3.500 L926.200 6.800 L922 10.200Z" fill="#505050"/></svg>
<div class="abs" style="left:1256px;top:625px;width:13px;height:15px;background:#e3e3e3"></div>
<!-- paging toolbar -->
<div class="abs tb" style="left:326px;top:639px;width:943px;height:33px;border-top:1px solid #99bce8"></div>
<div class="sep" style="left:388px;top:648px;height:17px"></div>
<div class="sep" style="left:527px;top:648px;height:17px"></div>
<div class="inp" style="left:448px;top:644px;width:37px;height:27px"></div>
<svg style="left:326px;top:640px" width="270" height="32" viewBox="326 640 270 32" fill="#c2d0e3" stroke="#a9bcd6" stroke-width=".8">
 <rect x="336" y="650.500" width="2.600" height="13"/><path d="M348.300 650.500 v13 l-8 -6.500z"/>
 <path d="M375.200 650.500 v13 l-8 -6.500z"/>
 <path d="M541 650.500 v13 l8 -6.500z"/>
 <path d="M568.500 650.500 v13 l8 -6.500z"/><rect x="577.600" y="650.500" width="2.600" height="13"/>
</svg>
<div class="t" style="left:340.40px;top:84.00px;font-size:13px;font-weight:bold;color:#416da3;letter-spacing:0.55px;">Dashboard</div><div class="t" style="left:440.60px;top:84.00px;font-size:13px;font-weight:bold;color:#1b3f78;letter-spacing:0.82px;">PSEW0250</div><div class="t" style="left:335.40px;top:116.75px;font-size:13.5px;font-weight:bold;color:#1b3f78;letter-spacing:0.22px;">Colaboradores</div><div class="t" style="left:336.50px;top:222.75px;font-size:13.5px;font-weight:bold;color:#1b3f78;letter-spacing:0.21px;">Mais Filtros</div><div class="t" style="left:339.00px;top:152.00px;font-size:14px;letter-spacing:-0.03px;">Empresa:</div><div class="t" style="left:521.30px;top:152.00px;font-size:14px;letter-spacing:0.05px;">Matrícula:</div><div class="t" style="left:631.70px;top:152.00px;font-size:14px;letter-spacing:0.14px;">Nome Colaborador:</div><div class="t" style="left:899.70px;top:152.00px;font-size:14px;letter-spacing:0.03px;">Situação:</div><div class="t" style="left:903.70px;top:179.75px;font-size:14.5px;letter-spacing:-0.07px;">Contrat</div><div class="t" style="left:1059.00px;top:180.62px;font-size:13.75px;color:#333;letter-spacing:-0.52px;">Pesquisar</div><div class="t" style="left:1185.00px;top:180.62px;font-size:13.75px;color:#333;letter-spacing:-0.26px;word-spacing:0.40px;">Limpar Filtros</div><div class="t" style="left:357.80px;top:256.62px;font-size:13.75px;color:#333;letter-spacing:-0.44px;">Adicionar</div><div class="t" style="left:452.00px;top:256.62px;font-size:13.75px;color:#333;letter-spacing:-0.37px;">Editar</div><div class="t" style="left:525.70px;top:256.62px;font-size:13.75px;color:#333;letter-spacing:-0.65px;">Remover</div><div class="t" style="left:617.20px;top:256.62px;font-size:13.75px;color:#333;letter-spacing:0.12px;">Importar</div><div class="t" style="left:710.70px;top:256.62px;font-size:13.75px;color:#333;letter-spacing:-0.33px;word-spacing:0.51px;">Limpar Filtros</div><div class="t" style="left:884.40px;top:256.62px;font-size:13.75px;color:#333;letter-spacing:-0.59px;word-spacing:0.90px;">Canc. Marcações</div><div class="t" style="left:1022.30px;top:256.62px;font-size:13.75px;color:#333;letter-spacing:-0.62px;word-spacing:0.91px;">REP On-Line</div><div class="t" style="left:1136.00px;top:256.62px;font-size:13.75px;color:#333;letter-spacing:-0.25px;word-spacing:0.37px;">Habilita Ponto Mobile</div><div class="t" style="left:333.80px;top:284.62px;font-size:13.75px;letter-spacing:-0.63px;">Empresa</div><div class="t" style="left:475.60px;top:284.62px;font-size:13.75px;letter-spacing:-0.36px;">Matrícula</div><div class="t" style="left:616.30px;top:284.62px;font-size:13.75px;letter-spacing:-0.38px;word-spacing:0.58px;">Nome Colaborador</div><div class="t" style="left:850.30px;top:284.62px;font-size:13.75px;letter-spacing:-0.31px;word-spacing:0.47px;">Data Admissão</div><div class="t" style="left:1022.30px;top:284.62px;font-size:13.75px;letter-spacing:-0.38px;word-spacing:0.58px;">Data Demissão</div><div class="t" style="left:1194.20px;top:284.62px;font-size:13.75px;letter-spacing:-0.29px;">Situação</div><div class="t" style="left:398.00px;top:650.62px;font-size:13.75px;color:#3b4756;letter-spacing:-0.50px;">Página</div><div class="t" style="left:453.50px;top:650.62px;font-size:13.75px;">1</div><div class="t" style="left:492.50px;top:650.62px;font-size:13.75px;color:#3b4756;letter-spacing:-0.59px;word-spacing:0.71px;">de 1</div><div class="t" style="left:1105.00px;top:650.00px;font-size:14px;font-weight:bold;color:#484c55;letter-spacing:0.30px;">1 à 48 de 48 registro(s)</div><svg style="left:540px;top:345px" width="40" height="45" viewBox="540 345 40 45"><path d="M551.500 354 L551.500 379.300 L557 373.800 L560.300 381.300 L564 379 L560.700 372.200 L568.600 372Z" fill="#ffd60a" stroke="#111" stroke-width="1.500" stroke-linejoin="round"/></svg>
<svg style="left:315.500px;top:366.500px" width="8" height="14" viewBox="0 0 8 14"><path d="M6.300 4 L3.300 7 L6.300 10Z" fill="#4a4a4a"/></svg>

<!-- ============ SOUTH: footer ============ -->
<div class="abs bd tb" style="left:10px;top:673px;width:1260px;height:41px"></div>
<svg style="left:0;top:670px" width="260" height="50" viewBox="0 670 260 50">
  <ellipse cx="23.400" cy="694" rx="9.400" ry="9.200" fill="#fd9a3e"/>
  <path d="M19.500 686.500 C23 684 30 685 32 690.500 C29 688 24 686.500 19.500 686.500Z" fill="#2a4f7a"/>
  <path d="M18.500 688.500 L25.500 688.300 L24.300 695 L16.300 694.400 C16.600 692 17.300 690 18.500 688.500Z" fill="#dde8f6"/>
  <path d="M14.200 695 L24 696.200 L22 702.900 C17.500 703 14.500 699.500 14.200 695Z" fill="#2a4f7a"/>
  <text font-family="Liberation Sans, sans-serif" font-size="32.700" fill="#fd9a3e" stroke="#fd9a3e" stroke-width=".5" transform="translate(32.600,703) scale(1.21,1)">ponto</text>
  <text font-family="Liberation Sans, sans-serif" font-size="32.700" fill="#2261a8" stroke="#2261a8" stroke-width=".4" transform="translate(132.500,703) scale(1.09,1)">soft</text>
  <text font-family="Liberation Sans, sans-serif" font-size="9.500" font-weight="bold" fill="#2a86b5" y="707.500" x="189.500">ex</text>
  <circle cx="190.700" cy="685.500" r="1.300" fill="none" stroke="#2261a8" stroke-width=".6"/>
</svg>
<div class="sep" style="left:258.500px;top:685px;height:18px"></div>
<div class="sep" style="left:570.500px;top:685px;height:18px"></div>
<div class="t" style="left:209.40px;top:687.62px;font-size:13.75px;color:#444;letter-spacing:-0.29px;">7.2.3.1</div><div class="t" style="left:268.00px;top:687.62px;font-size:13.75px;color:#444;letter-spacing:-0.04px;">Copyright (c) 2000-2023 Insoft4 Informática Ltda</div>
</div></div>
</body>
</html>
